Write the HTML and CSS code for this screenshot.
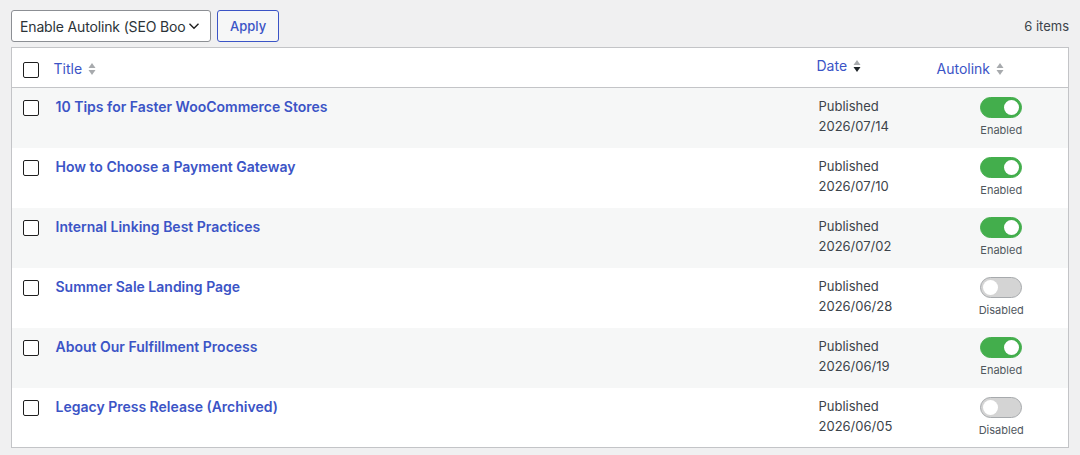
FILE: index.html
```html
<!DOCTYPE html>
<html lang="en">
  <head>
    <meta charset="UTF-8" />
    <title>Posts</title>
    <link rel="stylesheet" href="styles.css">
  </head>
  <body>
    <div class="tablenav">
      <div class="bulk-actions">
        <div class="select-box">
          <span class="select-text">Enable Autolink (SEO Boo</span>
          <svg class="chevron" width="12" height="8" viewBox="0 0 12 8"><path d="M1.5 1.8 6 6.2l4.5-4.4" fill="none" stroke="#1e1e1e" stroke-width="1.4"/></svg>
        </div>
        <button class="apply-btn">Apply</button>
      </div>
      <span class="items-count">6 items</span>
    </div>

    <table class="posts-table">
      <thead>
        <tr>
          <th class="check-col"><span class="checkbox"></span></th>
          <th class="title-col"><a href="#">Title</a> <svg class="sort" width="8" height="14" viewBox="0 0 8 14"><path d="M4 1 7.5 6h-7z" fill="#a7aaad"/><path d="M4 13 7.5 8h-7z" fill="#a7aaad"/></svg></th>
          <th class="date-col sorted"><a href="#">Date</a> <svg class="sort" width="8" height="14" viewBox="0 0 8 14"><path d="M4 1 7.5 6h-7z" fill="#a7aaad"/><path d="M4 13 7.5 8h-7z" fill="#1d2327"/></svg></th>
          <th class="autolink-col"><a href="#">Autolink</a> <svg class="sort" width="8" height="14" viewBox="0 0 8 14"><path d="M4 1 7.5 6h-7z" fill="#a7aaad"/><path d="M4 13 7.5 8h-7z" fill="#a7aaad"/></svg></th>
        </tr>
      </thead>
      <tbody>
        <tr>
          <td class="check-col"><span class="checkbox"></span></td>
          <td class="title-col"><a class="row-title" href="#">10 Tips for Faster WooCommerce Stores</a></td>
          <td class="date-col">Published<br>2026/07/14</td>
          <td class="autolink-col"><span class="toggle on"></span><span class="toggle-label">Enabled</span></td>
        </tr>
        <tr>
          <td class="check-col"><span class="checkbox"></span></td>
          <td class="title-col"><a class="row-title" href="#">How to Choose a Payment Gateway</a></td>
          <td class="date-col">Published<br>2026/07/10</td>
          <td class="autolink-col"><span class="toggle on"></span><span class="toggle-label">Enabled</span></td>
        </tr>
        <tr>
          <td class="check-col"><span class="checkbox"></span></td>
          <td class="title-col"><a class="row-title" href="#">Internal Linking Best Practices</a></td>
          <td class="date-col">Published<br>2026/07/02</td>
          <td class="autolink-col"><span class="toggle on"></span><span class="toggle-label">Enabled</span></td>
        </tr>
        <tr>
          <td class="check-col"><span class="checkbox"></span></td>
          <td class="title-col"><a class="row-title" href="#">Summer Sale Landing Page</a></td>
          <td class="date-col">Published<br>2026/06/28</td>
          <td class="autolink-col"><span class="toggle"></span><span class="toggle-label">Disabled</span></td>
        </tr>
        <tr>
          <td class="check-col"><span class="checkbox"></span></td>
          <td class="title-col"><a class="row-title" href="#">About Our Fulfillment Process</a></td>
          <td class="date-col">Published<br>2026/06/19</td>
          <td class="autolink-col"><span class="toggle on"></span><span class="toggle-label">Enabled</span></td>
        </tr>
        <tr>
          <td class="check-col"><span class="checkbox"></span></td>
          <td class="title-col"><a class="row-title" href="#">Legacy Press Release (Archived)</a></td>
          <td class="date-col">Published<br>2026/06/05</td>
          <td class="autolink-col"><span class="toggle"></span><span class="toggle-label">Disabled</span></td>
        </tr>
      </tbody>
    </table>
  </body>
</html>
```

FILE: styles.css
```css
/* General */
body {
  font-family: Inter, "Noto Sans", sans-serif;
  font-size: 13px;
  background-color: #f0f0f1;
  color: #3c434a;
  margin: 0;
  padding: 10px 11px 0;
}
a {
  color: #3b54c6;
  text-decoration: none;
}

/* Toolbar */
.tablenav {
  display: flex;
  justify-content: space-between;
  align-items: center;
  height: 32px;
  margin-bottom: 5px;
}
.bulk-actions {
  display: flex;
  gap: 6px;
}
.select-box {
  display: flex;
  align-items: center;
  justify-content: space-between;
  width: 200px;
  height: 32px;
  box-sizing: border-box;
  padding: 0 10px 0 8px;
  background-color: #fff;
  border: 1px solid #8c8f94;
  border-radius: 3px;
  font-size: 14px;
  letter-spacing: -0.15px;
  color: #2c3338;
}
.select-text {
  white-space: nowrap;
}
.chevron {
  flex-shrink: 0;
}
.apply-btn {
  height: 32px;
  padding: 0 12px;
  font-family: inherit;
  font-size: 13px;
  font-weight: 500;
  color: #3b54c6;
  background-color: #f6f7f7;
  border: 1px solid #3b54c6;
  border-radius: 3px;
}
.items-count {
  color: #3c434a;
}

/* Table */
.posts-table {
  width: 100%;
  border-collapse: collapse;
  border: 1px solid #c3c4c7;
  background-color: #fff;
  table-layout: fixed;
}
.posts-table th,
.posts-table td {
  text-align: left;
  vertical-align: top;
  padding: 9px 10px 8px;
  line-height: 20px;
}
.posts-table thead th {
  height: 40px;
  box-sizing: border-box;
  padding-top: 11px;
  font-weight: 400;
  font-size: 14px;
  border-bottom: 1px solid #c3c4c7;
}
.posts-table thead th.sorted {
  padding-top: 8px;
}
.posts-table tbody tr {
  height: 60px;
}
.posts-table tbody tr:nth-child(odd) {
  background-color: #f6f7f7;
}
.sort {
  vertical-align: -2px;
  margin-left: 2px;
}
.check-col {
  width: 32px;
  box-sizing: border-box;
}
.posts-table .check-col {
  padding: 12px 0 0 11px;
}
.posts-table thead .check-col {
  padding-top: 14px;
}
.posts-table .title-col {
  padding-left: 10px;
}
.posts-table tbody .title-col {
  padding-left: 12px;
}
.date-col {
  width: 120px;
}
.posts-table tbody .date-col {
  padding-top: 8px;
  padding-left: 12px;
  color: #3c434a;
}
.autolink-col {
  width: 142px;
}
.posts-table tbody .autolink-col {
  text-align: center;
  padding-left: 14px;
  padding-right: 6px;
}
.checkbox {
  display: block;
  width: 16px;
  height: 16px;
  box-sizing: border-box;
  border: 1px solid #1e1e1e;
  border-radius: 2px;
  background-color: #fff;
}
.row-title {
  font-size: 14px;
  font-weight: 600;
}

/* Toggle */
.toggle {
  display: block;
  position: relative;
  width: 42px;
  height: 21px;
  margin: 0 auto;
  box-sizing: border-box;
  border-radius: 11px;
  background-color: #d4d4d4;
  border: 1px solid #a7aaad;
}
.toggle::after {
  content: "";
  position: absolute;
  top: 2px;
  left: 2px;
  width: 15px;
  height: 15px;
  border-radius: 50%;
  background-color: #fff;
}
.toggle.on {
  background-color: #43ae4c;
  border-color: #43ae4c;
}
.toggle.on::after {
  left: auto;
  right: 2px;
}
.toggle-label {
  display: block;
  font-size: 11px;
  line-height: 14px;
  margin-top: 5px;
  color: #50575e;
}
```
